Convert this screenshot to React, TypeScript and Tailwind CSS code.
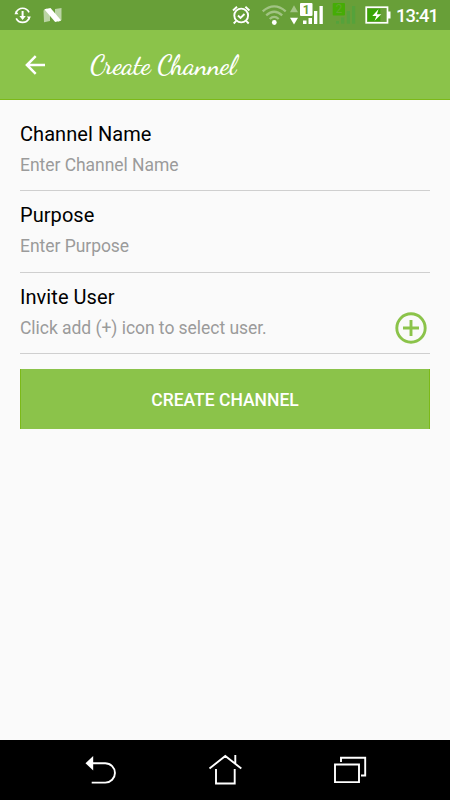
type FieldProps = {
  label: string
  hint: string
  onAdd?: () => void
}

function StatusBar() {
  return (
    <div className="flex h-[30px] items-center bg-[#689f38] text-white">
      <svg width="450" height="30" viewBox="0 0 450 30" fill="none">
        {/* sync */}
        <g stroke="white" strokeWidth="1.7">
          <path d="M16.2 12.3A7.1 7.1 0 0 1 29 12.3M16.2 18.3A7.1 7.1 0 0 0 29 18.3" />
          <path d="M22.6 11v7" strokeWidth="2" />
        </g>
        <path d="M19.4 16h6.4l-3.2 3.9zM14.5 14.2l1.4-3.4 2.6 3.4zM30.8 16.4l-1.4 3.4-2.6-3.4z" fill="white" />

        {/* android n */}
        <path d="M43.5 10.5L46.5 8.5L50 12.5V21L44 22.2ZM55 9L61.5 8V20L58.5 22L55 18Z" fill="white" fillOpacity=".55" />
        <path d="M44.3 9.2L50.5 8L61.2 20.6L55.2 22Z" fill="white" />

        {/* alarm */}
        <g stroke="white" strokeWidth="1.9">
          <circle cx="241.2" cy="15.5" r="6.9" />
          <path d="M233 10.5l4-3.7M249.4 10.5l-4-3.7M236.3 20.8l-2.6 2.7M246.1 20.8l2.6 2.7" />
          <path d="M238 15.5l2.5 2.5 4-4" />
        </g>

        {/* wifi */}
        <g stroke="white" strokeOpacity=".38" strokeWidth="2.3">
          <path d="M262.7 11.3Q274.2 1.5 285.7 11.3" />
          <path d="M266.2 15.3Q274.2 8.2 282.2 15.3" />
          <path d="M269.7 19Q274.2 14.8 278.7 19" />
        </g>
        <circle cx="274.3" cy="22.5" r="2.4" fill="white" />
        <path d="M290 12.2h8L294 5.3z" fill="white" fillOpacity=".4" />
        <path d="M290 17.8h8L294 24.5z" fill="white" />

        {/* sim 1 */}
        <rect x="300" y="3" width="12.5" height="13" rx="1" fill="white" />
        <path d="M303 20.5h3.5V24H303zM308.5 18h3.5v6h-3.5zM314 11h3.3v13H314zM319.5 6h3.3v18h-3.3z" fill="white" />
        <text x="306.3" y="13.6" textAnchor="middle" fontSize="12" fontFamily="Roboto, sans-serif" fontWeight="700" fill="#689f38">1</text>

        {/* sim 2 */}
        <rect x="332.7" y="3" width="12.3" height="12.5" rx="1" fill="#45ac05" />
        <path d="M336 21h3v2.7h-3zM341 17.5h3.3v6.2H341zM346.8 11h3.2v12.7h-3.2zM352 6h3.2v17.7H352z" fill="#55a23b" />
        <text x="338.8" y="13.4" textAnchor="middle" fontSize="12" fontFamily="Roboto, sans-serif" fill="#5fa92c">2</text>

        {/* battery */}
        <rect x="366.2" y="7.2" width="21.3" height="15.6" stroke="white" strokeWidth="1.7" />
        <rect x="367.8" y="8.8" width="12.5" height="12.4" fill="#38a506" />
        <path d="M388 11.5h2.5v7H388z" fill="white" />
        <path d="M378.5 9.2l-6.2 6.8h4.1l-1.8 4.8 6.7-6.5h-4.4z" fill="white" />
        <text x="396" y="22" fontSize="18.3" fontFamily="Roboto, sans-serif" fontWeight="500" textLength="43" fill="white">13:41</text>
      </svg>
    </div>
  )
}

function Header() {
  return (
    <header className="flex h-[70px] items-center border-b border-[#7cb918] bg-[#8bc34a] pl-[25px]">
      <button aria-label="Back">
        <svg width="20" height="20" viewBox="0 0 20 20" fill="none" stroke="white" strokeWidth="2.5">
          <path d="M20 10H2.2M10.7 1.2L1.9 10l8.8 8.8" />
        </svg>
      </button>
      <h1 className="ml-[45px] pt-[2px] font-['Dancing_Script',cursive] text-[27px] leading-[32px] font-semibold tracking-[-0.2px] whitespace-nowrap text-white">
        Create Channel
      </h1>
    </header>
  )
}

function Field({ label, hint, onAdd }: FieldProps) {
  return (
    <div className="flex h-[81.3px] items-start justify-between border-b border-[#cfcfcf] pt-[11px]">
      <div>
        <div className="text-[20px] leading-[26px] tracking-[0.06px] text-black">{label}</div>
        <div className="mt-[5px] text-[17.5px] leading-[26px] tracking-[-0.04px] text-[#9b9b9b]">{hint}</div>
      </div>
      {onAdd && (
        <button aria-label="Add user" onClick={onAdd} className="mt-[28px] mr-[3px]">
          <svg width="32" height="32" viewBox="0 0 32 32" fill="none" stroke="#8bc34a" strokeWidth="2.9">
            <circle cx="16" cy="16" r="14.2" />
            <path d="M16 8v16M8 16h16" />
          </svg>
        </button>
      )}
    </div>
  )
}

function NavBar() {
  return (
    <nav className="flex h-[60px] items-center justify-between bg-black px-[80px]">
      <button aria-label="Back">
        <svg width="40" height="60" viewBox="80 740 40 60" fill="none">
          <path d="M91 763.3h14.3a9.6 9.6 0 0 1 0 19.3H91.7" stroke="white" strokeWidth="1.9" />
          <path d="M85.5 763.3L93.2 756v14.5z" fill="white" />
        </svg>
      </button>
      <button aria-label="Home">
        <svg width="40" height="60" viewBox="205 740 40 60" fill="none" stroke="white" strokeWidth="1.9">
          <path d="M209.5 768.5L225.3 756l16 12.5M216 769v14.5h18.7V769M235.3 755v9" />
        </svg>
      </button>
      <button aria-label="Recent apps">
        <svg width="40" height="60" viewBox="330 740 40 60" fill="none" stroke="white" strokeWidth="1.9">
          <path d="M335 764.5h24v17.6h-24zM341 762v-4.2h24.2v17.7H361" />
        </svg>
      </button>
    </nav>
  )
}

export default function App() {
  return (
    <div className="flex h-[800px] w-[450px] flex-col overflow-hidden bg-[#fafafa] font-['Roboto',sans-serif]">
      <StatusBar />
      <Header />
      <main className="flex-1 px-5 pt-[10px]">
        <Field label="Channel Name" hint="Enter Channel Name" />
        <Field label="Purpose" hint="Enter Purpose" />
        <Field label="Invite User" hint="Click add (+) icon to select user." onAdd={() => {}} />
        <button className="mt-[15px] h-[60px] w-full border-x border-[#7cb918] bg-[#8bc34a] pt-[2px] text-[17.5px] font-medium text-white">
          CREATE CHANNEL
        </button>
      </main>
      <NavBar />
    </div>
  )
}
